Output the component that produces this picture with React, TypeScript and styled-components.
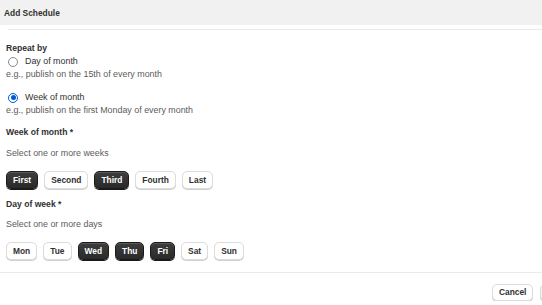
import * as React from "react";
import styled, { createGlobalStyle } from "styled-components";

const GlobalStyle = createGlobalStyle`
  html, body {
    margin: 0;
    padding: 0;
    background: #ffffff;
    overflow: hidden;
  }
  body {
    font-family: "Liberation Sans", Arial, sans-serif;
    color: #303030;
    -webkit-font-smoothing: antialiased;
  }
`;

const Dialog = styled.div`
  width: 542px;
  display: flex;
  flex-direction: column;
`;

const Header = styled.div`
  height: 25px;
  background: #f1f1f1;
  display: flex;
  align-items: center;
  padding: 0 4px;
  font-size: 8.4px;
  font-weight: 700;
  color: #303030;
`;

const TopRule = styled.div`
  height: 1px;
  margin: 4px 0 0 8px;
  background: #ebebeb;
`;

const Body = styled.div`
  padding: 12px 6px 0;
  display: flex;
  flex-direction: column;
`;

const Label = styled.div<{ $gap?: number }>`
  font-size: 8.6px;
  font-weight: 700;
  line-height: 13px;
  margin-top: ${(p) => p.$gap ?? 0}px;
`;

const Help = styled.div<{ $gap?: number }>`
  font-size: 8.9px;
  line-height: 13px;
  color: #5c5c5c;
  margin-top: ${(p) => p.$gap ?? 0}px;
`;

const RadioRow = styled.label<{ $gap?: number }>`
  display: flex;
  align-items: center;
  gap: 7px;
  padding-left: 2px;
  font-size: 8.9px;
  line-height: 13px;
  color: #303030;
  margin-top: ${(p) => p.$gap ?? 0}px;
`;

const RadioDot = styled.span<{ $checked?: boolean }>`
  width: 10px;
  height: 10px;
  box-sizing: border-box;
  border-radius: 50%;
  border: ${(p) => (p.$checked ? "1.5px solid #005bd3" : "1px solid #8a8a8a")};
  background: #ffffff;
  display: flex;
  align-items: center;
  justify-content: center;

  &::after {
    content: "";
    width: 5px;
    height: 5px;
    border-radius: 50%;
    background: ${(p) => (p.$checked ? "#005bd3" : "transparent")};
  }
`;

const ChipRow = styled.div<{ $gap?: number }>`
  display: flex;
  gap: 6px;
  margin-top: ${(p) => p.$gap ?? 0}px;
`;

const Chip = styled.button<{ $active?: boolean }>`
  height: 18px;
  padding: 0 6px;
  border-radius: 5px;
  font-family: inherit;
  font-size: 8.4px;
  font-weight: 700;
  cursor: pointer;
  box-sizing: border-box;
  border: 1px solid ${(p) => (p.$active ? "#1a1a1a" : "#dcdcdc")};
  background: ${(p) =>
    p.$active ? "linear-gradient(#3d3d3d, #2a2a2a)" : "#ffffff"};
  color: ${(p) => (p.$active ? "#ffffff" : "#303030")};
  box-shadow: ${(p) =>
    p.$active
      ? "inset 0 1px 0 rgba(255,255,255,0.15), 0 1px 0 #1a1a1a"
      : "0 1px 0 #d0d0d0"};
`;

const Rule = styled.div`
  height: 1px;
  background: #ebebeb;
  margin-top: 12px;
`;

const Footer = styled.div`
  display: flex;
  justify-content: flex-end;
  gap: 7px;
  padding-top: 11px;
  margin-right: -32px;
`;

const FooterButton = styled.button<{ $disabled?: boolean }>`
  height: 17px;
  padding: 0 6px;
  border-radius: 5px;
  font-family: inherit;
  font-size: 8.4px;
  font-weight: 700;
  box-sizing: border-box;
  border: 1px solid #dcdcdc;
  background: ${(p) => (p.$disabled ? "#f1f1f1" : "#ffffff")};
  color: ${(p) => (p.$disabled ? "#b5b5b5" : "#303030")};
  box-shadow: 0 1px 0 #d0d0d0;
`;

const weeks = ["First", "Second", "Third", "Fourth", "Last"];
const days = ["Mon", "Tue", "Wed", "Thu", "Fri", "Sat", "Sun"];

export default function App() {
  const [mode, setMode] = React.useState<"day" | "week">("week");
  const [pickedWeeks, setPickedWeeks] = React.useState<string[]>(["First", "Third"]);
  const [pickedDays, setPickedDays] = React.useState<string[]>(["Wed", "Thu", "Fri"]);

  const toggle = (list: string[], set: (v: string[]) => void, v: string) =>
    set(list.includes(v) ? list.filter((x) => x !== v) : [...list, v]);

  return (
    <Dialog>
      <GlobalStyle />
      <Header>Add Schedule</Header>
      <TopRule />
      <Body>
        <Label>Repeat by</Label>
        <RadioRow onClick={() => setMode("day")}>
          <RadioDot $checked={mode === "day"} />
          Day of month
        </RadioRow>
        <Help>e.g., publish on the 15th of every month</Help>
        <RadioRow $gap={10} onClick={() => setMode("week")}>
          <RadioDot $checked={mode === "week"} />
          Week of month
        </RadioRow>
        <Help>e.g., publish on the first Monday of every month</Help>

        <Label $gap={9}>Week of month *</Label>
        <Help $gap={8}>Select one or more weeks</Help>
        <ChipRow $gap={10.5}>
          {weeks.map((w) => (
            <Chip
              key={w}
              $active={pickedWeeks.includes(w)}
              onClick={() => toggle(pickedWeeks, setPickedWeeks, w)}
            >
              {w}
            </Chip>
          ))}
        </ChipRow>

        <Label $gap={9.5}>Day of week *</Label>
        <Help $gap={7}>Select one or more days</Help>
        <ChipRow $gap={10.5}>
          {days.map((d) => (
            <Chip
              key={d}
              $active={pickedDays.includes(d)}
              onClick={() => toggle(pickedDays, setPickedDays, d)}
            >
              {d}
            </Chip>
          ))}
        </ChipRow>
      </Body>
      <Rule />
      <Footer>
        <FooterButton>Cancel</FooterButton>
        <FooterButton $disabled>Save</FooterButton>
      </Footer>
    </Dialog>
  );
}
